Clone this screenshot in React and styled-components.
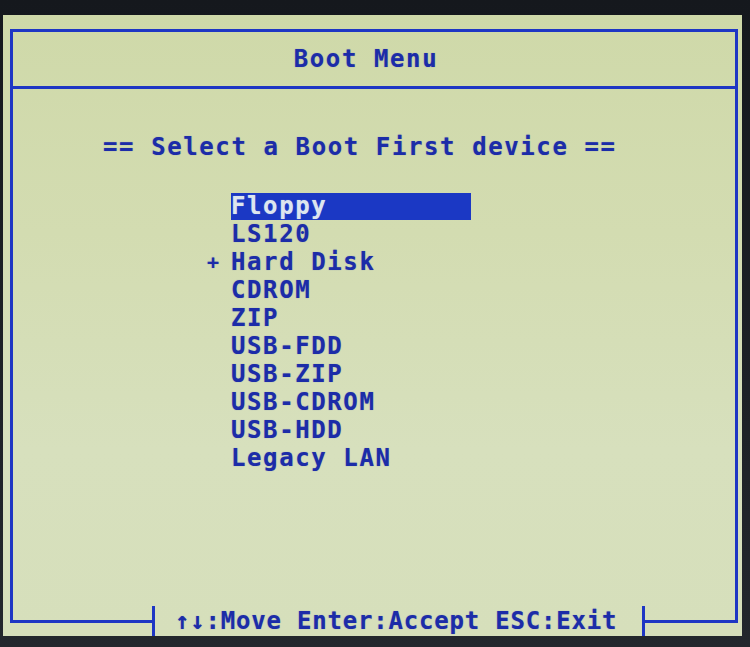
import React from 'react';
import styled, { createGlobalStyle } from 'styled-components';

const INK = '#1c2ca8';
const LINE = '#1e36c4';
const PANEL = '#d3dcb1';

const devices = [
  { name: 'Floppy', selected: true },
  { name: 'LS120' },
  { name: 'Hard Disk', mark: '+' },
  { name: 'CDROM' },
  { name: 'ZIP' },
  { name: 'USB-FDD' },
  { name: 'USB-ZIP' },
  { name: 'USB-CDROM' },
  { name: 'USB-HDD' },
  { name: 'Legacy LAN' },
];

const GlobalStyle = createGlobalStyle`
  html, body {
    margin: 0;
    padding: 0;
    background: #1b1f25;
  }
  body {
    font-family: "DejaVu Sans Mono", "Liberation Mono", monospace;
  }
`;

const Page = styled.div`
  width: 750px;
  height: 647px;
  padding: 15px 0 0 3px;
  box-sizing: border-box;
  background: linear-gradient(180deg, #15181d 0%, #1d2127 60%, #23272d 100%);
`;

const Screen = styled.div`
  width: 739px;
  height: 621px;
  box-sizing: border-box;
  padding: 14px 4px 0 7px;
  display: flex;
  flex-direction: column;
  background: linear-gradient(180deg, #cfd9a9 0%, ${PANEL} 35%, #d7e0bd 70%, #d6dfbb 100%);
`;

const Frame = styled.div`
  flex: 1;
  display: flex;
  flex-direction: column;
  border: 3px solid ${LINE};
  border-bottom: none;
`;

const Text = styled.span`
  font-family: "DejaVu Sans Mono", "Liberation Mono", monospace;
  font-weight: bold;
  font-size: 24px;
  letter-spacing: ${(p) => p.$spacing || '1.6px'};
  color: ${INK};
  white-space: pre;
  text-shadow: 0 0 1px rgba(29, 47, 174, 0.45);
`;

const TitleBar = styled.div`
  height: 54px;
  display: flex;
  align-items: center;
  justify-content: center;
  padding-right: 16px;
  border-bottom: 3px solid ${LINE};
`;

const Body = styled.div`
  flex: 1;
  display: flex;
  flex-direction: column;
  padding: 44px 0 0 90px;
`;

const DeviceList = styled.ul`
  list-style: none;
  margin: 31px 0 0 96px;
  padding: 0;
  display: flex;
  flex-direction: column;
`;

const Row = styled.li`
  height: 28px;
  display: flex;
  align-items: center;
`;

const Mark = styled(Text)`
  width: 32px;
  letter-spacing: 0;
  text-align: left;
  padding-left: 8px;
  box-sizing: border-box;
  font-size: 20px;
`;

const Item = styled(Text)`
  width: 240px;
  height: 27px;
  display: flex;
  align-items: center;
  background: ${(p) => (p.$selected ? '#1b38c4' : 'transparent')};
  color: ${(p) => (p.$selected ? '#dde6ee' : INK)};
  text-shadow: ${(p) => (p.$selected ? '0 0 1px rgba(230,240,250,0.5)' : '0 0 1px rgba(29, 47, 174, 0.45)')};
`;

const Footer = styled.div`
  height: 30px;
  display: flex;
  align-items: stretch;
`;

const Corner = styled.div`
  flex: 0 0 ${(p) => p.$width};
  height: 17px;
  box-sizing: border-box;
  border-bottom: 3px solid ${LINE};
  border-left: ${(p) => (p.$side === 'left' ? `3px solid ${LINE}` : 'none')};
  border-right: ${(p) => (p.$side === 'right' ? `3px solid ${LINE}` : 'none')};
`;

const Bar = styled.div`
  flex: 0 0 3px;
  background: ${LINE};
`;

const Hints = styled.div`
  flex: 1;
  display: flex;
  align-items: center;
  padding-left: 20px;
`;

export default function App() {
  return (
    <Page>
      <GlobalStyle />
      <Screen>
        <Frame>
          <TitleBar>
            <Text>Boot Menu</Text>
          </TitleBar>
          <Body>
            <Text>== Select a Boot First device ==</Text>
            <DeviceList>
              {devices.map((d) => (
                <Row key={d.name}>
                  <Mark>{d.mark || ' '}</Mark>
                  <Item $selected={d.selected}>{d.name}</Item>
                </Row>
              ))}
            </DeviceList>
          </Body>
        </Frame>
        <Footer>
          <Corner $side="left" $width="142px" />
          <Bar />
          <Hints>
            <Text $spacing="0.8px">↑↓:Move Enter:Accept ESC:Exit</Text>
          </Hints>
          <Bar />
          <Corner $side="right" $width="93px" />
        </Footer>
      </Screen>
    </Page>
  );
}
